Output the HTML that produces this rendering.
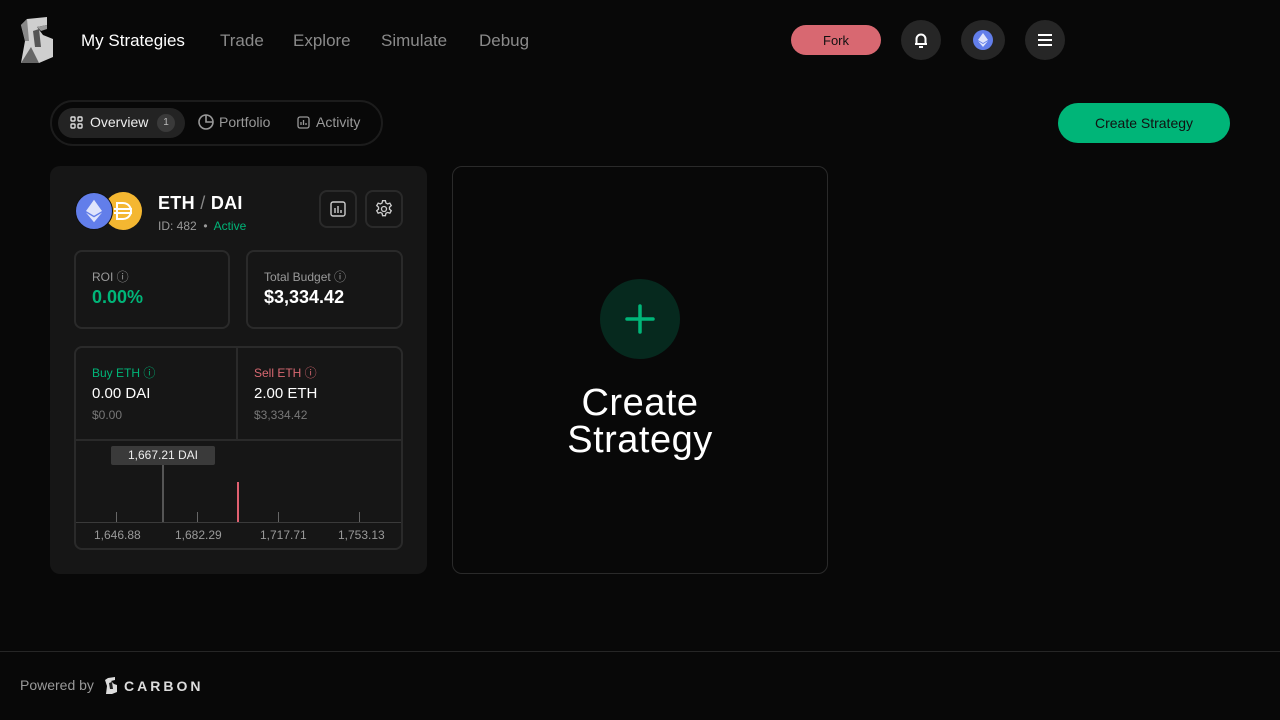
<!DOCTYPE html>
<html><head><meta charset="utf-8"><style>
*{box-sizing:border-box;margin:0;padding:0}
body{width:1280px;height:720px;background:#080808;font-family:"Liberation Sans",sans-serif;color:#fff;position:relative;overflow:hidden}
.abs{position:absolute}
.nav{font-size:17px;color:#8a8a8a;top:31px}
.circ{width:40px;height:40px;border-radius:50%;background:#262626;top:20px;display:flex;align-items:center;justify-content:center}
.box{border:2px solid #2a2a2a;border-radius:8px}
.small{font-size:12px;color:#9a9a9a}
.tick{position:absolute;width:1px;height:14px;background:#666;top:512px}
.lbl{position:absolute;top:528px;font-size:12px;color:#9a9a9a}
</style></head><body>
<svg class="abs" style="left:19px;top:17px" width="36" height="46" viewBox="0 0 36 46">
<polygon points="8,2 28,0 28,8 18,10 24,18 34,22 34,40 20,46 2,46 6,24 2,8" fill="#cfcfcf"/>
<polygon points="2,8 8,2 10,24 6,24" fill="#888"/>
<polygon points="2,46 12,30 20,46" fill="#666"/>
<polygon points="14,14 20,12 22,30 16,30" fill="#555"/>
<polygon points="18,10 28,8 28,12 22,14" fill="#999"/>
</svg>
<div class="abs nav" style="left:81px;color:#fff">My Strategies</div>
<div class="abs nav" style="left:220px">Trade</div>
<div class="abs nav" style="left:293px">Explore</div>
<div class="abs nav" style="left:381px">Simulate</div>
<div class="abs nav" style="left:479px">Debug</div>
<div class="abs" style="left:791px;top:25px;width:90px;height:30px;border-radius:15px;background:#d86871;color:#111;font-size:13px;display:flex;align-items:center;justify-content:center">Fork</div>
<div class="abs circ" style="left:901px"><svg width="18" height="18" viewBox="0 0 18 18" fill="none" stroke="#fff" stroke-width="2" stroke-linejoin="round"><path d="M4.5 13V8a4.5 4.5 0 0 1 9 0v5M3 13h12M7 16h4"/></svg></div>
<div class="abs circ" style="left:961px;width:44px"><div style="width:20px;height:20px;border-radius:50%;background:#627eea;display:flex;align-items:center;justify-content:center"><svg width="10" height="14" viewBox="0 0 10 14"><path d="M5 0L0 7l5 3 5-3z M5 11L0 8l5 6 5-6z" fill="#dfe4fb"/></svg></div></div>
<div class="abs circ" style="left:1025px"><svg width="16" height="14" viewBox="0 0 16 14" stroke="#fff" stroke-width="2"><path d="M1 2h14M1 7h14M1 12h14"/></svg></div>

<div class="abs" style="left:50px;top:100px;width:333px;height:46px;border:2px solid #1c1c1c;border-radius:23px"></div>
<div class="abs" style="left:58px;top:108px;width:127px;height:30px;border-radius:15px;background:#232323"></div>
<svg class="abs" style="left:70px;top:116px" width="13" height="13" viewBox="0 0 13 13" fill="none" stroke="#ddd" stroke-width="1.4"><rect x="1" y="1" width="4" height="4" rx="1"/><rect x="8" y="1" width="4" height="4" rx="1"/><rect x="1" y="8" width="4" height="4" rx="1"/><rect x="8" y="8" width="4" height="4" rx="1"/></svg>
<div class="abs" style="left:90px;top:114px;font-size:14px;color:#eee">Overview</div>
<div class="abs" style="left:157px;top:114px;width:18px;height:18px;border-radius:50%;background:#3a3a3a;font-size:10px;color:#bbb;text-align:center;line-height:18px">1</div>
<svg class="abs" style="left:198px;top:114px" width="16" height="16" viewBox="0 0 16 16" fill="none" stroke="#999" stroke-width="1.6"><circle cx="8" cy="8" r="7"/><path d="M8 1v7h7"/></svg>
<div class="abs" style="left:219px;top:114px;font-size:14px;color:#999">Portfolio</div>
<svg class="abs" style="left:297px;top:116px" width="13" height="13" viewBox="0 0 13 13" fill="none" stroke="#999" stroke-width="1.3"><rect x="1" y="1" width="11" height="11" rx="2"/><path d="M4 9V6M6.5 9V4M9 9V7"/></svg>
<div class="abs" style="left:316px;top:114px;font-size:14px;color:#999">Activity</div>
<div class="abs" style="left:1058px;top:103px;width:172px;height:40px;border-radius:20px;background:#00b578;color:#111;font-size:14px;display:flex;align-items:center;justify-content:center">Create Strategy</div>

<div class="abs" style="left:50px;top:166px;width:377px;height:408px;background:#161616;border-radius:10px"></div>
<div class="abs" style="left:104px;top:192px;width:38px;height:38px;border-radius:50%;background:#f4b731"></div>
<svg class="abs" style="left:112px;top:200px" width="22" height="22" viewBox="0 0 22 22" fill="none" stroke="#fff" stroke-width="2"><path d="M5 3h6a8 8 0 0 1 0 16H5zM2 9h18M2 13h18"/></svg>
<div class="abs" style="left:75px;top:192px;width:38px;height:38px;border-radius:50%;background:#627eea;border:1px solid #111;display:flex;align-items:center;justify-content:center"><svg width="16" height="24" viewBox="0 0 10 14"><path d="M5 0L0 7l5 3 5-3z M5 11L0 8l5 6 5-6z" fill="#dfe4fb"/></svg></div>
<div class="abs" style="left:158px;top:193px;font-size:18px;font-weight:bold;letter-spacing:0.3px">ETH <span style="color:#888;font-weight:normal">/</span> DAI</div>
<div class="abs small" style="left:158px;top:219px">ID: 482 &nbsp;•&nbsp; <span style="color:#00b578">Active</span></div>
<div class="abs box" style="left:319px;top:190px;width:38px;height:38px;display:flex;align-items:center;justify-content:center"><svg width="16" height="16" viewBox="0 0 16 16" fill="none" stroke="#ccc" stroke-width="1.4"><rect x="1" y="1" width="14" height="14" rx="2"/><path d="M5 12V7M8 12V5M11 12V9"/></svg></div>
<div class="abs box" style="left:365px;top:190px;width:38px;height:38px;display:flex;align-items:center;justify-content:center"><svg width="20" height="20" viewBox="0 0 24 24" fill="none" stroke="#ccc" stroke-width="1.6"><circle cx="12" cy="12" r="3"/><path d="M10.3 2h3.4l.6 2.8 2 1.1 2.7-.9 1.7 2.9-2.1 1.9v2.4l2.1 1.9-1.7 2.9-2.7-.9-2 1.1-.6 2.8h-3.4l-.6-2.8-2-1.1-2.7.9-1.7-2.9 2.1-1.9V9.8L3.3 7.9 5 5l2.7.9 2-1.1z"/></svg></div>

<div class="abs box" style="left:74px;top:250px;width:156px;height:79px"></div>
<div class="abs small" style="left:92px;top:268px">ROI ⓘ</div>
<div class="abs" style="left:92px;top:287px;font-size:18px;color:#00b578;font-weight:bold">0.00%</div>
<div class="abs box" style="left:246px;top:250px;width:157px;height:79px"></div>
<div class="abs small" style="left:264px;top:268px">Total Budget ⓘ</div>
<div class="abs" style="left:264px;top:287px;font-size:18px;font-weight:bold">$3,334.42</div>

<div class="abs box" style="left:74px;top:346px;width:329px;height:204px"></div>
<div class="abs" style="left:236px;top:348px;width:2px;height:92px;background:#2a2a2a"></div>
<div class="abs" style="left:76px;top:439px;width:325px;height:2px;background:#2a2a2a"></div>
<div class="abs small" style="left:92px;top:364px;color:#00b578">Buy ETH ⓘ</div>
<div class="abs" style="left:92px;top:385px;font-size:15px">0.00 DAI</div>
<div class="abs small" style="left:92px;top:408px;color:#777">$0.00</div>
<div class="abs small" style="left:254px;top:364px;color:#d86871">Sell ETH ⓘ</div>
<div class="abs" style="left:254px;top:385px;font-size:15px">2.00 ETH</div>
<div class="abs small" style="left:254px;top:408px;color:#777">$3,334.42</div>
<div class="abs" style="left:111px;top:446px;width:104px;height:19px;background:#3a3a3a;border-radius:2px;font-size:12px;text-align:center;line-height:19px;color:#eee">1,667.21 DAI</div>
<div class="abs" style="left:162px;top:465px;width:2px;height:58px;background:#555"></div>
<div class="abs" style="left:237px;top:482px;width:2px;height:41px;background:#e06070"></div>
<div class="abs" style="left:76px;top:522px;width:325px;height:1px;background:#3a3a3a"></div>
<div class="tick" style="left:116px;top:512px;height:10px"></div>
<div class="tick" style="left:197px;top:512px;height:10px"></div>
<div class="tick" style="left:278px;top:512px;height:10px"></div>
<div class="tick" style="left:359px;top:512px;height:10px"></div>
<div class="lbl" style="left:94px">1,646.88</div>
<div class="lbl" style="left:175px">1,682.29</div>
<div class="lbl" style="left:260px">1,717.71</div>
<div class="lbl" style="left:338px">1,753.13</div>

<div class="abs" style="left:452px;top:166px;width:376px;height:408px;border:1px solid #2a2a2a;border-radius:10px"></div>
<div class="abs" style="left:600px;top:279px;width:80px;height:80px;border-radius:50%;background:#06291e;display:flex;align-items:center;justify-content:center"><svg width="32" height="32" viewBox="0 0 32 32" stroke="#00b578" stroke-width="3.5" stroke-linecap="round"><path d="M16 3v26M3 16h26"/></svg></div>
<div class="abs" style="left:452px;top:385px;width:376px;text-align:center;font-size:38px;line-height:37px;letter-spacing:0.5px">Create<br>Strategy</div>

<div class="abs" style="left:0;top:651px;width:1280px;height:1px;background:#262626"></div>
<div class="abs" style="left:20px;top:677px;font-size:14px;color:#999">Powered by</div>
<svg class="abs" style="left:105px;top:677px" width="14" height="17" viewBox="0 0 14 17"><polygon points="3,1 10,0 10,3 6,4 9,7 12,8 12,15 7,17 1,17 2,9 0,3" fill="#ddd"/><polygon points="4,6 7,5 8,12 5,12" fill="#222"/></svg>
<div class="abs" style="left:124px;top:678px;font-size:14px;letter-spacing:3px;color:#ddd;font-weight:bold">CARBON</div>
</body></html>
